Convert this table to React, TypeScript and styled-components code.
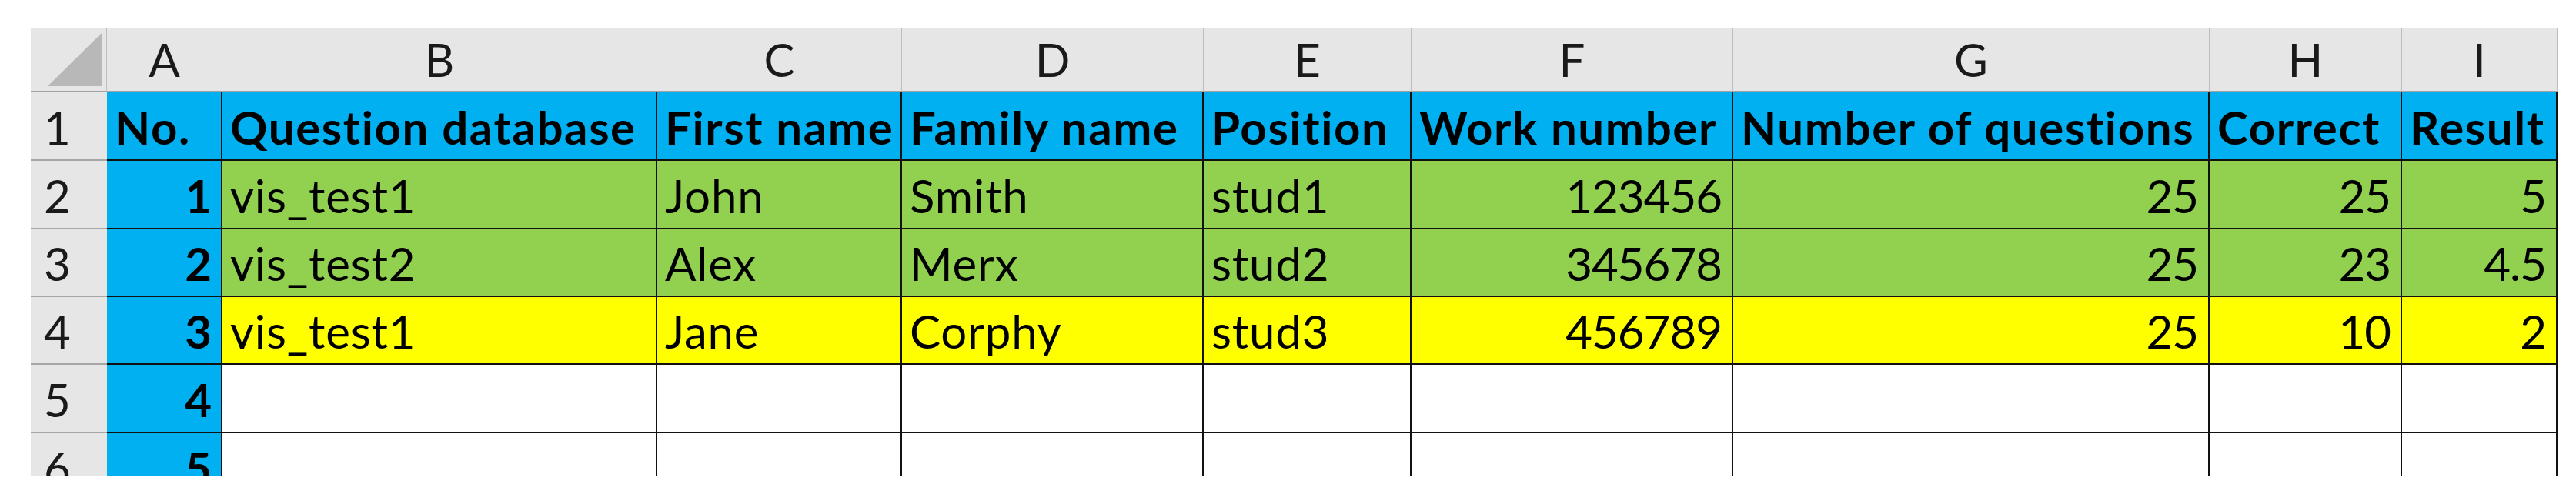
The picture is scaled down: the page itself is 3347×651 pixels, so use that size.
import React from "react";
import styled, { createGlobalStyle } from "styled-components";

const GlobalStyle = createGlobalStyle`
  html, body {
    margin: 0;
    padding: 0;
    background: #ffffff;
  }
  body {
    font-family: Lato, "Liberation Sans", sans-serif;
  }
`;

const COLS = [99, 150, 565, 318, 392, 270, 418, 619, 250, 202];
const ROWS = [83, 89, 89, 88, 88, 89, 89];
const LETTERS = ["A", "B", "C", "D", "E", "F", "G", "H", "I"];

type Fill = "blue" | "green" | "yellow" | "white";
const FILLS: Record<Fill, string> = {
  blue: "#00b0f0",
  green: "#92d050",
  yellow: "#ffff00",
  white: "#ffffff",
};

const Sheet = styled.div`
  margin: 37px 0 0 40px;
  width: 3283px;
  height: 581px;
  overflow: hidden;
  display: grid;
  grid-template-columns: ${COLS.map((c) => c + "px").join(" ")};
  grid-template-rows: ${ROWS.map((r) => r + "px").join(" ")};
  font-size: 60px;
  line-height: 72px;
  color: #000;
  font-variant-numeric: tabular-nums;
`;

const Corner = styled.div`
  background: #e6e6e6;
  border-right: 1px solid #bdbdbd;
  border-bottom: 2px solid #a3a3a3;
  box-sizing: border-box;
  > svg {
    display: block;
  }
`;

const ColHead = styled.div`
  background: #e6e6e6;
  border-right: 1px solid #bdbdbd;
  border-bottom: 2px solid #a3a3a3;
  box-sizing: border-box;
  display: flex;
  align-items: flex-end;
  justify-content: center;
  padding-bottom: 5px;
  color: #1a1a1a;
`;

const RowHead = styled.div`
  background: #e6e6e6;
  border-bottom: 2px solid #a6a6a6;
  box-sizing: border-box;
  display: flex;
  align-items: flex-end;
  padding: 0 0 6px 17px;
  color: #1a1a1a;
`;

const Cell = styled.div<{ $fill: Fill; $num?: boolean; $bold?: boolean }>`
  background: ${(p) => FILLS[p.$fill]};
  border-right: 2px solid #111;
  border-bottom: 2px solid #111;
  box-sizing: border-box;
  display: flex;
  align-items: flex-end;
  justify-content: ${(p) => (p.$num ? "flex-end" : "flex-start")};
  padding: 0 13px 6px 10px;
  font-weight: ${(p) => (p.$bold ? 700 : 400)};
  letter-spacing: ${(p) => (p.$num ? "-1px" : p.$bold ? "1.6px" : "0.8px")};
  white-space: nowrap;
  overflow: hidden;
`;

const headers = [
  "No.",
  "Question database",
  "First name",
  "Family name",
  "Position",
  "Work number",
  "Number of questions",
  "Correct",
  "Result",
];

type Row = { fill: Fill; values: (string | number)[] };

const rows: Row[] = [
  { fill: "green", values: [1, "vis_test1", "John", "Smith", "stud1", 123456, 25, 25, 5] },
  { fill: "green", values: [2, "vis_test2", "Alex", "Merx", "stud2", 345678, 25, 23, 4.5] },
  { fill: "yellow", values: [3, "vis_test1", "Jane", "Corphy", "stud3", 456789, 25, 10, 2] },
  { fill: "white", values: [4, "", "", "", "", "", "", "", ""] },
  { fill: "white", values: [5, "", "", "", "", "", "", "", ""] },
];

const App = () => {
  return (
    <>
      <GlobalStyle />
      <Sheet>
        <Corner>
          <svg width="98" height="81" viewBox="0 0 98 81">
            <polygon points="92,6 92,75 22,75" fill="#b8b8b8" />
          </svg>
        </Corner>
        {LETTERS.map((l) => (
          <ColHead key={l}>{l}</ColHead>
        ))}

        <RowHead>1</RowHead>
        {headers.map((h) => (
          <Cell key={h} $fill="blue" $bold>
            {h}
          </Cell>
        ))}

        {rows.map((row, i) => (
          <React.Fragment key={i}>
            <RowHead>{i + 2}</RowHead>
            {row.values.map((v, j) => (
              <Cell
                key={j}
                $fill={j === 0 ? "blue" : row.fill}
                $num={typeof v === "number"}
                $bold={j === 0}
              >
                {v}
              </Cell>
            ))}
          </React.Fragment>
        ))}
      </Sheet>
    </>
  );
};

export default App;
